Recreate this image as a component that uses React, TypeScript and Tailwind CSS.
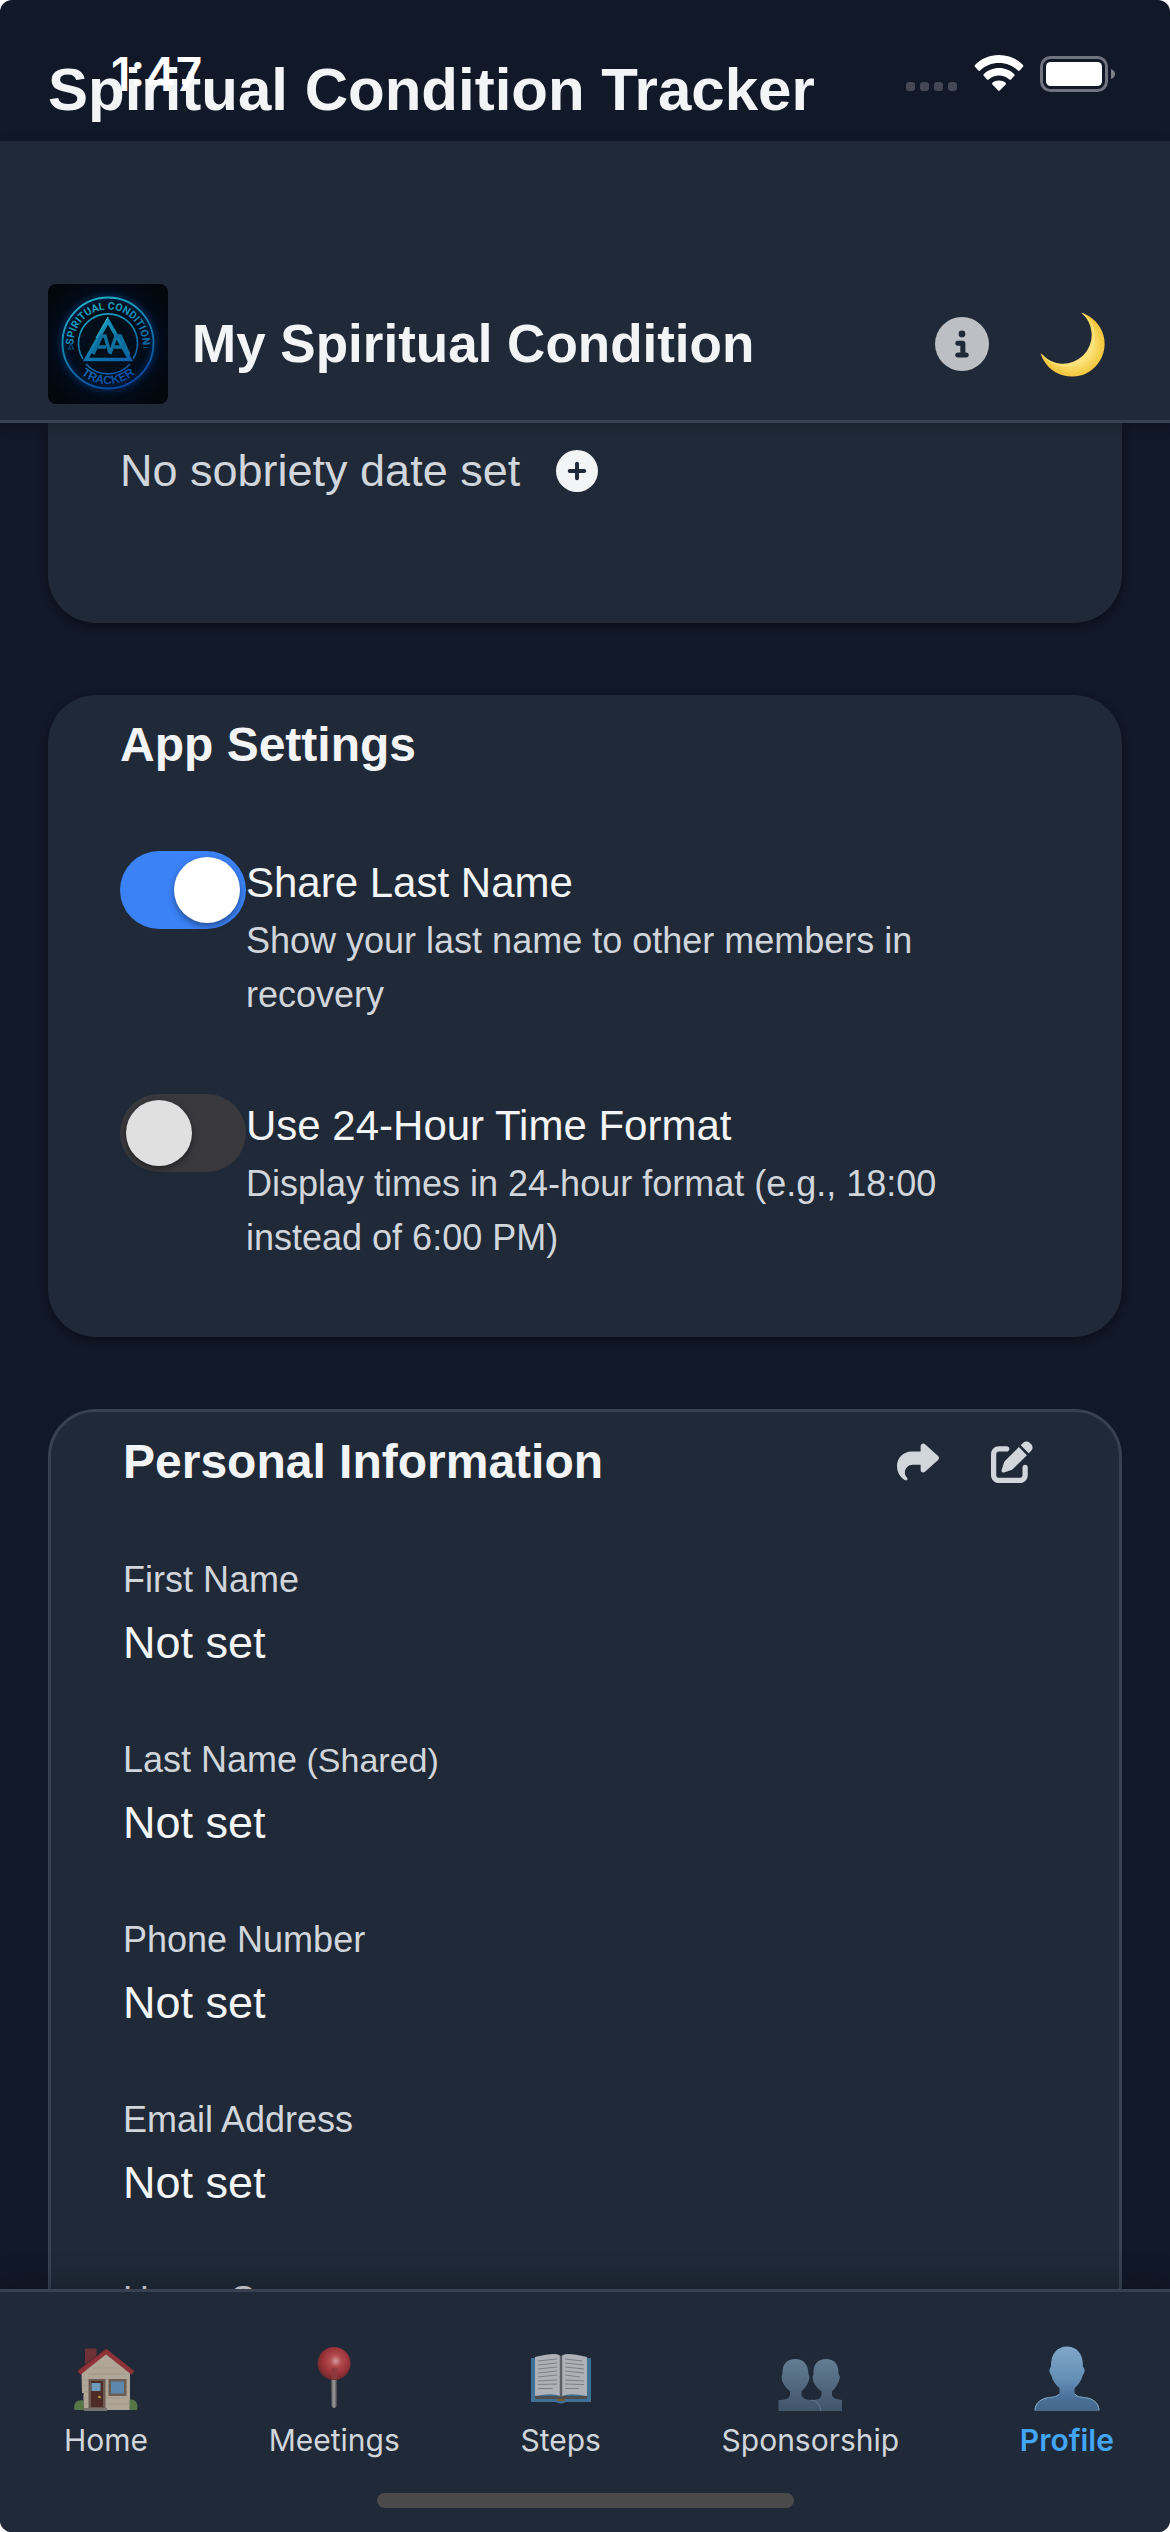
import { useState } from 'react';
import type { ReactNode } from 'react';
import { FaCircleInfo, FaCirclePlus, FaPenToSquare, FaShare } from 'react-icons/fa6';

function Logo() {
  return (
    <svg viewBox="0 0 120 120" className="size-[120px] shrink-0 rounded-lg" role="img" aria-label="Spiritual Condition Tracker logo">
      <defs>
        <radialGradient id="logoBg" cx="50%" cy="50%" r="60%">
          <stop offset="0" stopColor="#001018" />
          <stop offset="0.65" stopColor="#020c1c" />
          <stop offset="1" stopColor="#01070d" />
        </radialGradient>
        <linearGradient id="logoInk" gradientUnits="userSpaceOnUse" x1="40" y1="12" x2="80" y2="106">
          <stop offset="0" stopColor="#20b4c6" />
          <stop offset="0.5" stopColor="#0e7cae" />
          <stop offset="1" stopColor="#0a3ea0" />
        </linearGradient>
        <filter id="logoGlow" x="-20%" y="-20%" width="140%" height="140%">
          <feGaussianBlur stdDeviation="3" />
        </filter>
        <path id="arcTop" d="M 27 70 A 34.5 34.5 0 1 1 93 70" />
        <path id="arcBottom" d="M 19 59 A 41 41 0 0 0 101 59" />
      </defs>
      <rect width="120" height="120" fill="url(#logoBg)" />
      <circle cx="60" cy="59" r="46" fill="none" stroke="#0a4fa0" strokeWidth="3" opacity="0.7" filter="url(#logoGlow)" />
      <circle cx="60" cy="59" r="45.5" fill="none" stroke="url(#logoInk)" strokeWidth="1.8" />
      <path d="M35 75 A29.5 29.5 0 1 1 85 75" fill="none" stroke="url(#logoInk)" strokeWidth="1.6" />
      <path d="M38 80 A29.5 29.5 0 0 0 82 80" fill="none" stroke="url(#logoInk)" strokeWidth="1.6" />
      <path d="M60 37 L38 75.500 H82 Z" fill="none" stroke="url(#logoInk)" strokeWidth="3.6" strokeLinejoin="miter" />
      <path d="M45 70 L53.500 52 H57 L62 69 M50 63 H58 M62 70 L68 52 H72.500 L81 71 M66 63 H75" fill="none" stroke="#0d6f9f" strokeWidth="3.4" />
      <path d="M60 33 L48 54" stroke="#2cc4d4" strokeWidth="1" />
      <g fill="url(#logoInk)" fontWeight="700">
        <text fontFamily="Roboto, sans-serif" fontSize="10.500" textAnchor="middle">
          <textPath href="#arcTop" startOffset="50%">SPIRITUAL CONDITION</textPath>
        </text>
        <text fontFamily="'Liberation Sans', sans-serif" fontSize="12" textAnchor="middle">
          <textPath href="#arcBottom" startOffset="50%">TRACKER</textPath>
        </text>
      </g>
      <path d="M20.500 65 L23 59.500 L25.500 65 Z M95 60.500 H100 M95 63.500 H100" fill="none" stroke="#0c4a78" strokeWidth="1.200" />
    </svg>
  );
}

function MoonIcon() {
  return (
    <svg viewBox="0 0 66 66" className="size-[66px]" aria-hidden="true">
      <defs>
        <radialGradient id="moonFill" cx="0.500" cy="0.500" r="0.600">
          <stop offset="0.500" stopColor="#fde27a" />
          <stop offset="0.750" stopColor="#f3cd48" />
          <stop offset="1" stopColor="#f6b92a" />
        </radialGradient>
      </defs>
      <path d="M41 1.500 A32.700 32.700 0 1 1 0.500 42 A28.800 28.800 0 1 0 41 1.500 Z" fill="url(#moonFill)" />
      <path d="M2 43.500 A29.200 29.200 0 1 0 43 2.500" fill="none" stroke="#fbea86" strokeWidth="1" />
    </svg>
  );
}

function HouseIcon() {
  return (
    <svg viewBox="0 0 66 66" className="size-[66px]" aria-hidden="true">
      <path d="M12 2.500 H23.500 V14 L12 22 Z" fill="#6e3236" />
      <path d="M8.500 26 L33 6 L57 26 V64 H10.500 V47 H9 Z" fill="#b0a697" />
      <path d="M10 34 H56 M10 40 H56 M10 46 H56 M10 52 H56 M10 58 H56 M20 22 H46 M15 28 H52" stroke="#9f9789" strokeWidth="0.700" />
      <path d="M6 27 L33 5.500 L60 27" fill="none" stroke="#8c3238" strokeWidth="4.500" />
      <path d="M5 24 L33 2.800" stroke="#40242a" strokeWidth="1" />
      <rect x="15.500" y="33" width="17" height="29" fill="#6c5a52" />
      <rect x="18" y="35" width="12" height="26" fill="#4d2c28" />
      <rect x="18.500" y="37" width="9" height="8" fill="#6d9dba" />
      <circle cx="26.500" cy="51" r="1.300" fill="#c49a4a" />
      <rect x="35.500" y="33" width="18" height="17" fill="#6b5c52" />
      <rect x="38" y="35.500" width="13" height="12" fill="#5d88ae" />
      <path d="M1.500 64 C0 57 4 53 10.500 54.500 V64 Z M56.500 54 C62 52 66 58 64 64 H56.500 Z" fill="#567645" />
      <path d="M11 62 H34 V65 H11 Z" fill="#77736d" />
    </svg>
  );
}

function PinIcon() {
  return (
    <svg viewBox="0 0 66 66" className="size-[66px]" aria-hidden="true">
      <defs>
        <radialGradient id="pinHead" cx="0.550" cy="0.420" r="0.580">
          <stop offset="0" stopColor="#d09a98" />
          <stop offset="0.300" stopColor="#b24b50" />
          <stop offset="0.700" stopColor="#983238" />
          <stop offset="1" stopColor="#6f282e" />
        </radialGradient>
        <linearGradient id="pinStem">
          <stop offset="0" stopColor="#4f5259" />
          <stop offset="0.500" stopColor="#a39d9b" />
          <stop offset="1" stopColor="#3b3f47" />
        </linearGradient>
      </defs>
      <path d="M30 30 H36 V60 Q33 64 30.500 60 Z" fill="url(#pinStem)" />
      <circle cx="33" cy="17.500" r="16.500" fill="url(#pinHead)" />
      <path d="M30 23 Q33 20 37 23 L36 33 H30.500 Z" fill="#8b3a3f" opacity="0.800" />
    </svg>
  );
}

function BookIcon() {
  return (
    <svg viewBox="0 0 66 66" className="size-[66px]" aria-hidden="true">
      <path d="M3 12 H63 V56 H38 Q33 59 28 56 H3 Z" fill="#3f7196" />
      <path d="M7 50 H59 V53 H37 Q33 56 29 53 H7 Z" fill="#4e4d50" />
      <path d="M7 11 Q27 6 31 9 Q33 11 35 9 Q39 6 59 11 V50 Q39 46 33 51 Q27 46 7 50 Z" fill="#aeb1b8" />
      <path d="M33 10 V51" stroke="#5d6067" strokeWidth="2.500" />
      <path d="M10 15 L29 13 M10 19 L29 17 M10 23 L29 21 M10 27 L29 25 M10 31 L29 29 M10 35 L29 34 M10 38.500 L29 38 M10 42.500 H25 M37 13 L54 15 M37 17 L56 19 M37 21 L56 23 M37 25 L56 27 M37 29 L52 31 M37 34 L56 35 M37 38 L56 38.500 M37 42.500 H51" stroke="#7c7f87" strokeWidth="1" />
      <path d="M29 54 H37" stroke="#6d5d30" strokeWidth="2" />
    </svg>
  );
}

function PeopleIcon() {
  return (
    <svg viewBox="0 0 66 66" className="size-[66px]" aria-hidden="true">
      <defs>
        <linearGradient id="peopleFill" x1="0" y1="0" x2="0" y2="1">
          <stop offset="0" stopColor="#647d92" />
          <stop offset="1" stopColor="#40546a" />
        </linearGradient>
      </defs>
      <path d="M49 13 C57 13 62 18 61.500 28 L63 31 C62 37 59 41 55 45.500 V49 C56 53 60 53 65 54 V65 H34 V54 C40 54 43.500 53 44.500 49 V45.500 C39 41 36 37 35.500 31 L36.500 28 C36 18 41 13 49 13 Z" fill="url(#peopleFill)" />
      <path d="M18.500 13 C26 13 31.500 18 31.500 28 L32.500 31 C32 37 29 41 24.500 45.500 V49 C25.500 53 30 54 35 54 C41 55 43.500 59 43.500 65 H1.500 V54 C8 54 12 53 13 49 V45.500 C8 41 5 37 4.500 31 L5.500 28 C5 18 10 13 18.500 13 Z" fill="url(#peopleFill)" />
      <path d="M34 54 C40 54.500 43.500 59 43.500 65" fill="none" stroke="#667f95" strokeWidth="0.800" />
    </svg>
  );
}

function PersonIcon() {
  return (
    <svg viewBox="0 0 66 66" className="size-[66px]" aria-hidden="true">
      <defs>
        <linearGradient id="personFill" x1="0" y1="0" x2="0" y2="1">
          <stop offset="0" stopColor="#80a7ca" />
          <stop offset="0.500" stopColor="#668fb6" />
          <stop offset="0.800" stopColor="#4b7099" />
          <stop offset="1" stopColor="#44678b" />
        </linearGradient>
      </defs>
      <path d="M33 0.500 C43 0.500 49.500 8 49 21 Q51 22 50.500 26 L48.500 30 C47.500 35 44 39 40.500 42.500 V47 C42 51 47 51 54 52 C62 54 65 58 65.500 65 H0.500 C1 58 4 54 12 52 C19 51 24 51 25.500 47 V42.500 C22 39 18.500 35 17.500 30 L15.500 26 Q15 22 17 21 C16.500 8 23 0.500 33 0.500 Z" fill="url(#personFill)" />
      <path d="M1 64 C1.500 58 5 54 12 52 C19 51 23 51 25 48 M41 48 C43 51 47 51 54 52 C61 54 64.500 58 65 64" fill="none" stroke="#84abc5" strokeWidth="1" />
    </svg>
  );
}

function StatusBar() {
  return (
    <div className="pointer-events-none absolute inset-x-0 top-0 flex items-start justify-between pt-[54px] pr-[54px] pl-[111px]">
      <span className="font-['Inter',sans-serif] text-[46px] leading-[41px] font-semibold text-white">1:47</span>
      <div className="flex items-start">
        <div className="mt-7 mr-[17px] flex gap-[5px]">
          {[0, 1, 2, 3].map((dot) => (
            <span key={dot} className="size-[9px] rounded-[3px] bg-[#444854]" />
          ))}
        </div>
        <svg viewBox="0 0 50 37" className="mr-4 h-[37px] w-[50px]" aria-hidden="true">
          <path
            fill="#fff"
            d="M25 1 C34.500 1 43 4.800 49 11 Q49.700 12 49 12.800 L45.700 16.500 Q44.800 17.300 43.900 16.400 C38.800 11.600 32.300 9 25 9 C17.700 9 11.200 11.600 6.100 16.400 Q5.200 17.300 4.300 16.500 L1 12.800 Q0.300 12 1 11 C7 4.800 15.500 1 25 1 Z M25 14 C31 14 36.300 16.300 40.300 20.200 Q41 21 40.300 21.800 L37 25.500 Q36.200 26.200 35.300 25.400 C32.500 22.900 29 21.500 25 21.500 C21 21.500 17.500 22.900 14.700 25.400 Q13.800 26.200 13 25.500 L9.700 21.800 Q9 21 9.700 20.200 C13.700 16.300 19 14 25 14 Z M25 26.500 C27.600 26.500 29.800 27.300 31.600 28.800 Q32.300 29.600 31.600 30.500 L25.800 36.500 Q25 37.200 24.200 36.500 L18.400 30.500 Q17.700 29.600 18.400 28.800 C20.200 27.300 22.400 26.500 25 26.500 Z"
          />
        </svg>
        <svg viewBox="0 0 76 40" className="h-10 w-[76px]" aria-hidden="true">
          <rect x="1.500" y="3.500" width="65" height="33" rx="9" fill="none" stroke="#70747e" strokeWidth="3" />
          <rect x="6" y="8" width="56" height="24" rx="4.500" fill="#fff" />
          <path d="M71 15 Q75 16.500 75 20 Q75 23.500 71 25 Z" fill="#7d818a" />
        </svg>
      </div>
    </div>
  );
}

function SettingRow({ id, label, hint, initial }: { id: string; label: string; hint: string; initial: boolean }) {
  const [on, setOn] = useState(initial);
  return (
    <div className="flex items-start">
      <input
        id={id}
        type="checkbox"
        role="switch"
        checked={on}
        onChange={() => setOn(!on)}
        className="flex h-[78px] w-[126px] shrink-0 appearance-none justify-start rounded-full bg-[#39393d] p-1.5 before:block before:size-[66px] before:rounded-full before:bg-[#e0e0e0] before:shadow-[0_3px_6px_rgba(0,0,0,0.4)] before:content-[''] checked:justify-end checked:bg-[#3b82f6] checked:before:bg-white"
      />
      <label htmlFor={id} className="min-w-0 flex-1">
        <span className="block text-[42px] leading-[63px] text-gray-100">{label}</span>
        <span className="block text-[36px] leading-[54px] text-gray-300">{hint}</span>
      </label>
    </div>
  );
}

function Field({ label, note }: { label: string; note?: string }) {
  return (
    <div>
      <dt className="text-[36px] leading-[54px] text-gray-300">
        {label}
        {note && <span className="text-[34px]"> {note}</span>}
      </dt>
      <dd className="text-[45px] leading-[72px] text-gray-100">Not set</dd>
    </div>
  );
}

const tabs: { label: string; icon: ReactNode; active?: boolean }[] = [
  { label: 'Home', icon: <HouseIcon /> },
  { label: 'Meetings', icon: <PinIcon /> },
  { label: 'Steps', icon: <BookIcon /> },
  { label: 'Sponsorship', icon: <PeopleIcon /> },
  { label: 'Profile', icon: <PersonIcon />, active: true },
];

export default function App() {
  return (
    <div className="h-screen bg-white">
      <div className="relative flex h-full flex-col overflow-hidden rounded-xl bg-[#111827] font-['Liberation_Sans',Arial,sans-serif]">
        <div className="shrink-0 px-12 pt-[45px] pb-1.5">
          <p className="text-[60px] leading-[90px] font-bold whitespace-nowrap text-gray-100">Spiritual Condition Tracker</p>
        </div>
        <StatusBar />

        <header className="z-10 flex shrink-0 items-center border-b-3 border-[#374151] bg-[#1f2937] px-12 pt-[143px] pb-4 shadow-[0_3px_12px_rgba(0,0,0,0.2)]">
          <Logo />
          <h1 className="ml-6 flex-1 text-[53px] leading-[72px] font-bold whitespace-nowrap text-gray-100">My Spiritual Condition</h1>
          <button type="button" aria-label="About" className="mr-[51px] text-[54px] text-[#bcbfc4]">
            <FaCircleInfo />
          </button>
          <button type="button" aria-label="Toggle dark mode" className="mr-4">
            <MoonIcon />
          </button>
        </header>

        <main className="flex min-h-0 flex-1 flex-col gap-[72px] overflow-hidden px-12">
          <section className="flex shrink-0 items-center gap-9 rounded-b-[48px] bg-[#1f2937] px-[72px] pt-3.5 pb-[118px] shadow-[0_3px_9px_rgba(0,0,0,0.4)]">
            <p className="text-[45px] leading-[68px] text-gray-300">No sobriety date set</p>
            <button type="button" aria-label="Add sobriety date" className="text-[42px] text-gray-100">
              <FaCirclePlus />
            </button>
          </section>

          <section className="shrink-0 rounded-[48px] bg-[#1f2937] px-[72px] pt-3 pb-[72px] shadow-[0_3px_9px_rgba(0,0,0,0.4)]">
            <h2 className="mb-[68px] text-[48px] leading-[76px] font-bold text-gray-100">App Settings</h2>
            <div className="flex flex-col gap-[72px]">
              <SettingRow id="share-last-name" label="Share Last Name" hint="Show your last name to other members in recovery" initial />
              <SettingRow
                id="time-format"
                label="Use 24-Hour Time Format"
                hint="Display times in 24-hour format (e.g., 18:00 instead of 6:00 PM)"
                initial={false}
              />
            </div>
          </section>

          <section className="shrink-0 rounded-[48px] border-3 border-[#374151] bg-[#1f2937] px-[72px] pt-3 pb-[72px]">
            <div className="mb-[53px] flex items-center justify-between">
              <h2 className="text-[48px] leading-[76px] font-bold text-gray-100">Personal Information</h2>
              <div className="flex gap-6 text-[42px] text-gray-300">
                <button type="button" aria-label="Share" className="px-3.5">
                  <FaShare />
                </button>
                <button type="button" aria-label="Edit" className="px-3.5">
                  <FaPenToSquare />
                </button>
              </div>
            </div>
            <dl className="flex flex-col gap-[54px]">
              <Field label="First Name" />
              <Field label="Last Name" note="(Shared)" />
              <Field label="Phone Number" />
              <Field label="Email Address" />
              <Field label="Home Group" />
            </dl>
          </section>
        </main>

        <nav className="z-10 shrink-0 border-t-3 border-[#374151] bg-[#1f2937] pt-[54px] shadow-[0_-6px_30px_rgba(0,0,0,0.2)]">
          <div className="flex justify-between pr-14 pl-16">
            {tabs.map((tab) => (
              <a key={tab.label} href={'#' + tab.label.toLowerCase()} className="flex flex-col items-center gap-1.5">
                {tab.icon}
                <span
                  className={
                    tab.active
                      ? "font-['Inter',sans-serif] text-[30px] leading-[44px] font-semibold text-[#42a5f5]"
                      : "font-['Inter',sans-serif] text-[30px] leading-[44px] text-gray-300"
                  }
                >
                  {tab.label}
                </span>
              </a>
            ))}
          </div>
          <div className="mx-auto mt-[31px] mb-6 h-[15px] w-[417px] rounded-full bg-[#4a4a4a]" />
        </nav>
      </div>
    </div>
  );
}
